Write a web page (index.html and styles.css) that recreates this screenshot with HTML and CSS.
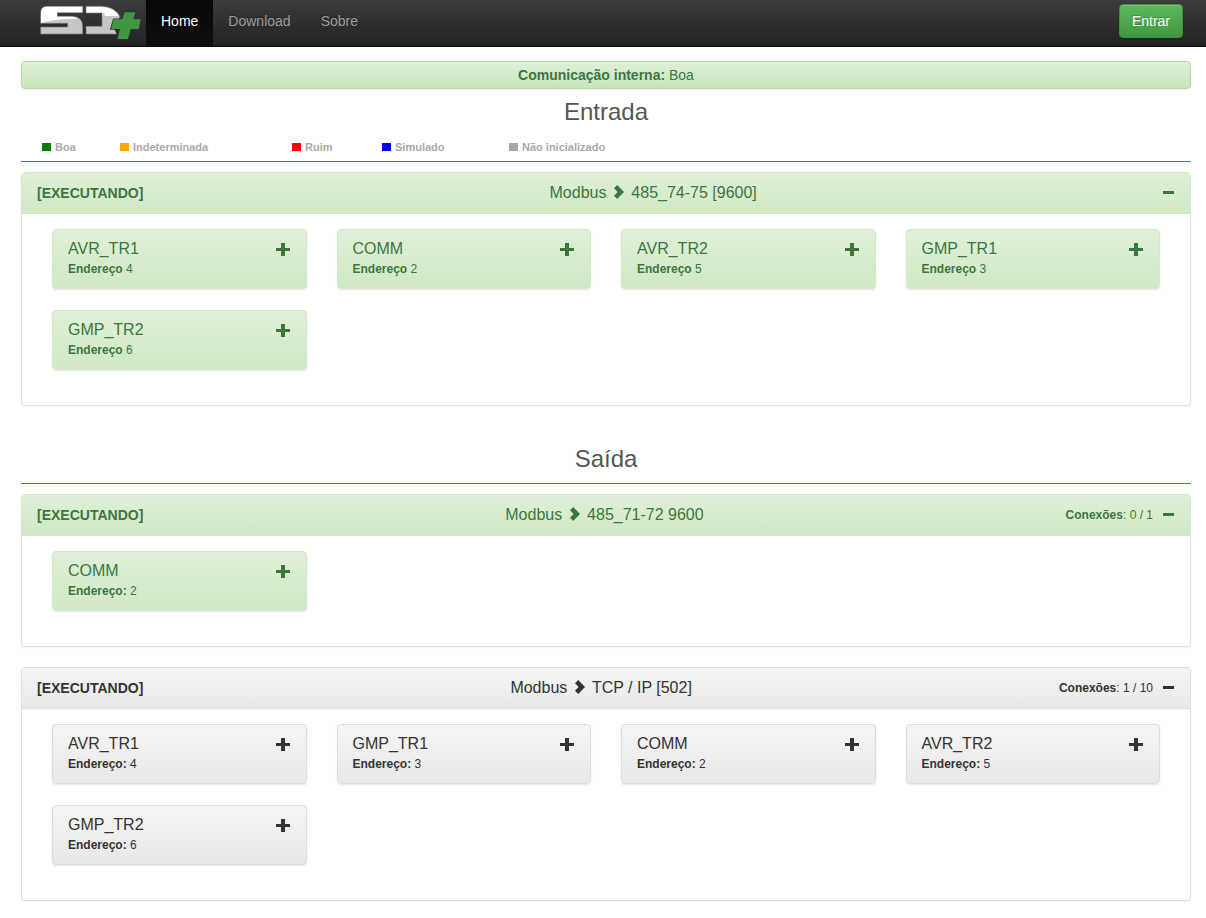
FILE: index.html
```html
<!DOCTYPE html>
<html lang="pt-BR">
	<head>
		<meta charset="UTF-8">
		<title>SD+</title>
		<link rel="stylesheet" href="styles.css">
	</head>
	<body>
		<svg class="sprite" aria-hidden="true">
			<symbol id="plus" viewBox="0 0 14 14"><path d="M5 0h4v5h5v3h-5v5h-4v-5h-5v-3h5z"/></symbol>
			<symbol id="minus" viewBox="0 0 12 14"><path d="M0 5h11v3h-11z"/></symbol>
			<symbol id="chevron" viewBox="0 0 12 14"><path d="M1 3.2L4.2 0 11 7 4.2 14 1 10.8 4.6 7z"/></symbol>
		</svg>
		<nav class="navbar">
			<a class="brand" href="#" aria-label="SD+">
				<svg class="logo" viewBox="0 0 306 108">
					<defs>
						<linearGradient id="metal" x1="0" y1="0" x2="0" y2="1">
							<stop offset="0.36" stop-color="#fff"/>
							<stop offset="0.36" stop-color="#c6c6c6"/>
						</linearGradient>
					</defs>
					<g stroke="#777" stroke-width="2">
						<path fill="#c6c6c6" d="M2 24Q2 4 20 4H128V23H52V34H98Q128 36 128 64V87H2V66H83V55H2z"/>
						<path fill="url(#metal)" d="M138 4H186Q226 6 240 36L220 66L230 87H138V64H186V24H138z"/>
					</g>
					<path fill="#fff" d="M3 24Q3 5 20 5H127V22H51V35H98Q108 36 114 41Q50 40 3 54z"/>
					<path fill="#c6c6c6" d="M187 25V34H194V25z"/>
					<path class="logo-plus" d="M254 22H286L280 43H302L296 72H272L264 102H233L240 72H213L221 43H247z"/>
				</svg>
			</a>
			<a class="nav-link active" href="#">Home</a>
			<a class="nav-link" href="#">Download</a>
			<a class="nav-link" href="#">Sobre</a>
			<button class="btn-entrar" type="button">Entrar</button>
		</nav>

		<main class="content">
			<div class="alert"><b>Comunicação interna:</b> Boa</div>

			<section>
				<h3 class="title">Entrada</h3>
				<ul class="legend">
					<li><i class="box boa"></i>Boa</li>
					<li><i class="box indeterminada"></i>Indeterminada</li>
					<li><i class="box ruim"></i>Ruim</li>
					<li><i class="box simulado"></i>Simulado</li>
					<li><i class="box inativo"></i>Não inicializado</li>
				</ul>
				<hr class="line">
				<div class="panel success">
					<div class="panel-heading">
						<b>[EXECUTANDO]</b>
						<h4 class="panel-title">Modbus <svg class="chevron"><use href="#chevron"/></svg> 485_74-75 [9600]</h4>
						<button class="toggle" type="button" aria-label="Recolher"><svg class="minus"><use href="#minus"/></svg></button>
					</div>
					<div class="panel-body">
						<div class="card">
							<div><h4>AVR_TR1</h4><p><b>Endereço</b> 4</p></div>
							<button class="toggle" type="button" aria-label="Expandir"><svg class="plus"><use href="#plus"/></svg></button>
						</div>
						<div class="card">
							<div><h4>COMM</h4><p><b>Endereço</b> 2</p></div>
							<button class="toggle" type="button" aria-label="Expandir"><svg class="plus"><use href="#plus"/></svg></button>
						</div>
						<div class="card">
							<div><h4>AVR_TR2</h4><p><b>Endereço</b> 5</p></div>
							<button class="toggle" type="button" aria-label="Expandir"><svg class="plus"><use href="#plus"/></svg></button>
						</div>
						<div class="card">
							<div><h4>GMP_TR1</h4><p><b>Endereço</b> 3</p></div>
							<button class="toggle" type="button" aria-label="Expandir"><svg class="plus"><use href="#plus"/></svg></button>
						</div>
						<div class="card">
							<div><h4>GMP_TR2</h4><p><b>Endereço</b> 6</p></div>
							<button class="toggle" type="button" aria-label="Expandir"><svg class="plus"><use href="#plus"/></svg></button>
						</div>
					</div>
				</div>
			</section>

			<section class="saida">
				<h3 class="title">Saída</h3>
				<hr class="line">
				<div class="panel success">
					<div class="panel-heading">
						<b>[EXECUTANDO]</b>
						<h4 class="panel-title">Modbus <svg class="chevron"><use href="#chevron"/></svg> 485_71-72 9600</h4>
						<span class="conexoes"><b>Conexões</b>: 0 / 1</span>
						<button class="toggle" type="button" aria-label="Recolher"><svg class="minus"><use href="#minus"/></svg></button>
					</div>
					<div class="panel-body">
						<div class="card">
							<div><h4>COMM</h4><p><b>Endereço:</b> 2</p></div>
							<button class="toggle" type="button" aria-label="Expandir"><svg class="plus"><use href="#plus"/></svg></button>
						</div>
					</div>
				</div>
				<div class="panel">
					<div class="panel-heading">
						<b>[EXECUTANDO]</b>
						<h4 class="panel-title">Modbus <svg class="chevron"><use href="#chevron"/></svg> TCP / IP [502]</h4>
						<span class="conexoes"><b>Conexões</b>: 1 / 10</span>
						<button class="toggle" type="button" aria-label="Recolher"><svg class="minus"><use href="#minus"/></svg></button>
					</div>
					<div class="panel-body">
						<div class="card">
							<div><h4>AVR_TR1</h4><p><b>Endereço:</b> 4</p></div>
							<button class="toggle" type="button" aria-label="Expandir"><svg class="plus"><use href="#plus"/></svg></button>
						</div>
						<div class="card">
							<div><h4>GMP_TR1</h4><p><b>Endereço:</b> 3</p></div>
							<button class="toggle" type="button" aria-label="Expandir"><svg class="plus"><use href="#plus"/></svg></button>
						</div>
						<div class="card">
							<div><h4>COMM</h4><p><b>Endereço:</b> 2</p></div>
							<button class="toggle" type="button" aria-label="Expandir"><svg class="plus"><use href="#plus"/></svg></button>
						</div>
						<div class="card">
							<div><h4>AVR_TR2</h4><p><b>Endereço:</b> 5</p></div>
							<button class="toggle" type="button" aria-label="Expandir"><svg class="plus"><use href="#plus"/></svg></button>
						</div>
						<div class="card">
							<div><h4>GMP_TR2</h4><p><b>Endereço:</b> 6</p></div>
							<button class="toggle" type="button" aria-label="Expandir"><svg class="plus"><use href="#plus"/></svg></button>
						</div>
					</div>
				</div>
			</section>
		</main>
	</body>
</html>
```

FILE: styles.css
```css
*{box-sizing: border-box;}
body{
	margin: 0;background: #fff;color: #333;
	font: 14px/20px Arial, "Liberation Sans", sans-serif;
}
h3,h4,p,ul{margin: 0;padding: 0;font-weight: normal;}
button{font-family: inherit;cursor: pointer;}
svg{fill: currentColor;}
.sprite{display: none;}

/* menu */
.navbar{
	display: flex;align-items: flex-start;padding: 0 23px 0 40px;
	height: 47px;border-bottom: 1px solid #080808;
	background: linear-gradient(#3c3c3c, #222);
}
.brand{padding: 5px 4px 0 0;}
.logo{display: block;width: 102px;height: 36px;}
.logo-plus{fill: #419641;stroke: #333;stroke-width: 5px;paint-order: stroke;}
.nav-link{
	padding: 11px 15px 15px;color: #9d9d9d;text-decoration: none;
	text-shadow: 0 -1px 0 rgba(0,0,0,.25);
}
.nav-link.active{color: #fff;background: linear-gradient(#080808, #0f0f0f);}
.btn-entrar{
	margin: 4px 0 0 auto;padding: 6px 12px;
	font-size: 14px;line-height: 20px;color: #fff;
	border: 1px solid #3e8f3e;border-radius: 4px;
	background: linear-gradient(#5cb85c, #419641);
	text-shadow: 0 -1px 0 rgba(0,0,0,.2);
	box-shadow: inset 0 1px 0 rgba(255,255,255,.15), 0 1px 1px rgba(0,0,0,.075);
}

.content{padding: 14px 15px 0 21px;}
.alert{
	padding: 3px;text-align: center;color: #3c763d;
	border: 1px solid #b2dba1;border-radius: 4px;
	background: linear-gradient(#dff0d8, #c8e5bc);
	text-shadow: 0 1px 0 rgba(255,255,255,.2);
	box-shadow: inset 0 1px 0 rgba(255,255,255,.25), 0 1px 2px rgba(0,0,0,.05);
}
.title{padding-top: 10px;text-align: center;font-size: 24px;line-height: 26px;color: #555;}
.legend{
	display: grid;grid-template-columns: 78px 172px 90px 127px auto;
	padding: 12px 0 4px 21px;list-style: none;
	font-size: 11px;line-height: 20px;font-weight: bold;color: #aaa;
}
.box{display: inline-block;width: 9px;height: 8px;margin-right: 4px;}
.boa{background: green;}
.indeterminada{background: orange;}
.ruim{background: red;}
.simulado{background: blue;}
.inativo{background: #a9a9a9;}
.line{margin: 0 0 10px;border: 0;border-top: 1px solid #337ab7;}
.saida{padding-top: 10px;}
.saida .line{margin-top: 11px;}

/* paineis */
.panel{
	margin-bottom: 20px;border: 1px solid #ddd;border-radius: 4px;
	box-shadow: 0 1px 2px rgba(0,0,0,.05);
}
.panel-heading{
	display: flex;align-items: center;
	height: 41px;padding: 0 15px;
	border-bottom: 1px solid #ddd;border-radius: 3px 3px 0 0;
	background: linear-gradient(#f5f5f5, #e8e8e8);
}
.panel-title{flex: 1;text-align: center;font-size: 16px;line-height: 20px;}
.chevron{width: 12px;height: 14px;margin: 0 2px;vertical-align: -1px;}
.conexoes{font-size: 12px;margin-right: 10px;}
.toggle{display: block;padding: 0;border: 0;background: none;color: inherit;}
.toggle svg{display: block;}
.minus{width: 12px;height: 14px;}
.plus{width: 14px;height: 14px;}
.panel-body{
	display: grid;grid-template-columns: repeat(4, 1fr);gap: 21px 30px;
	padding: 15px 30px 35px;
}
.card{
	display: flex;justify-content: space-between;align-items: flex-start;
	height: 60px;padding: 9px 16px 0 15px;
	border: 1px solid #ddd;border-radius: 4px;
	background: linear-gradient(#f5f5f5, #e8e8e8);
	box-shadow: 0 1px 2px rgba(0,0,0,.1);
}
.card h4{font-size: 16px;line-height: 20px;}
.card p{font-size: 12px;line-height: 20px;}
.card .toggle{padding-top: 4px;}
.success,.success .card{border-color: #d6e9c6;}
.success .panel-heading,.success .card{color: #3c763d;background: linear-gradient(#dff0d8, #d0e9c6);}
.success .panel-heading{border-color: #d0e9c6;}
```
